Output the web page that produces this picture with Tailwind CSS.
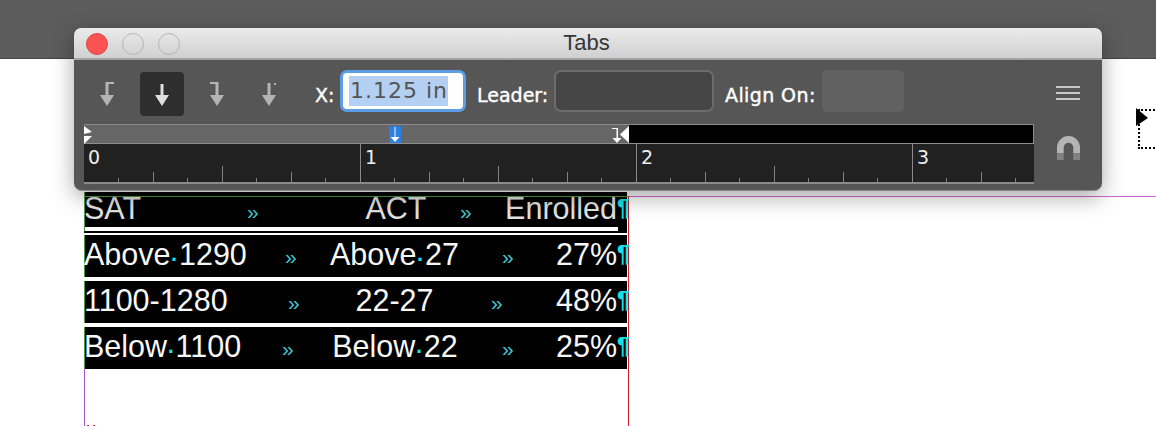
<!DOCTYPE html>
<html lang="en">

<head>
    <meta charset="UTF-8">
    <title>Tabs</title>
    <script src="https://cdn.jsdelivr.net/npm/@tailwindcss/browser@4"></script>
</head>

<body class="bg-white">
    <div class="relative w-[1156px] h-[426px] overflow-hidden bg-white font-['Liberation_Sans',sans-serif]">
        <!-- app toolbar behind the panel -->
        <div class="h-[59px] bg-[#5c5c5c] border-b border-[#444]"></div>

        <!-- table in the document -->
        <div class="relative z-10 ml-[84px] mt-[133px] w-[543px] text-[30.5px] leading-[39px] text-[#f7f7f7]">
            <div class="relative h-[39px] bg-black text-[#e2e2e2] flex border-l border-[#4f9a3c] leading-[33px]">
                <span class="w-[163px] -ml-px shrink-0">SAT</span>
                <span class="w-[10px] shrink-0 text-[21px] leading-[39px] text-[#43c9d2]">»</span>
                <span class="w-[203px] pl-[75px] shrink-0 text-center">ACT</span>
                <span class="w-[10px] shrink-0 text-[21px] leading-[39px] text-[#43c9d2]">»</span>
                <span class="w-[147px] shrink-0 text-right">Enrolled</span>
                <span class="text-[23px] font-bold text-[#18e0e6]">¶</span>
                <div class="absolute left-0 bottom-0 w-[533px] h-[4px] bg-white"></div>
            </div>
            <div class="h-[2px] bg-black"></div>
            <div class="h-[2px] bg-white"></div>
            <div class="h-[42px] bg-black flex border-l border-[#4f9a3c]">
                <span class="w-[201px] -ml-px shrink-0">Above<span class="relative top-[2px] inline-block w-[8.5px] text-center text-[22px] font-bold leading-none text-[#18e0e6]">·</span>1290</span>
                <span class="w-[10px] shrink-0 text-[21px] leading-[44px] text-[#43c9d2]">»</span>
                <span class="w-[207px] pr-[8px] shrink-0 text-center">Above<span class="relative top-[2px] inline-block w-[8.5px] text-center text-[22px] font-bold leading-none text-[#18e0e6]">·</span>27</span>
                <span class="w-[10px] shrink-0 text-[21px] leading-[44px] text-[#43c9d2]">»</span>
                <span class="w-[105px] shrink-0 text-right">27%</span>
                <span class="text-[23px] font-bold text-[#18e0e6]">¶</span>
            </div>
            <div class="h-[4px] bg-white"></div>
            <div class="h-[42px] bg-black flex border-l border-[#4f9a3c]">
                <span class="w-[204px] -ml-px shrink-0">1100-1280</span>
                <span class="w-[10px] shrink-0 text-[21px] leading-[44px] text-[#43c9d2]">»</span>
                <span class="w-[193px] shrink-0 text-center">22-27</span>
                <span class="w-[10px] shrink-0 text-[21px] leading-[44px] text-[#43c9d2]">»</span>
                <span class="w-[116px] shrink-0 text-right">48%</span>
                <span class="text-[23px] font-bold text-[#18e0e6]">¶</span>
            </div>
            <div class="h-[4px] bg-white"></div>
            <div class="h-[42px] bg-black flex border-l border-[#4f9a3c]">
                <span class="w-[198px] -ml-px shrink-0">Below<span class="relative top-[2px] inline-block w-[8.5px] text-center text-[22px] font-bold leading-none text-[#18e0e6]">·</span>1100</span>
                <span class="w-[10px] shrink-0 text-[21px] leading-[44px] text-[#43c9d2]">»</span>
                <span class="w-[210px] pr-[4px] shrink-0 text-center">Below<span class="relative top-[2px] inline-block w-[8.5px] text-center text-[22px] font-bold leading-none text-[#18e0e6]">·</span>22</span>
                <span class="w-[10px] shrink-0 text-[21px] leading-[44px] text-[#43c9d2]">»</span>
                <span class="w-[105px] shrink-0 text-right">25%</span>
                <span class="text-[23px] font-bold text-[#18e0e6]">¶</span>
            </div>
        </div>

        <!-- page guides -->
        <div class="absolute z-20 left-[84px] top-[196px] w-[543px] h-px bg-[#4f9a3c]"></div>
        <div class="absolute left-[627px] top-[196px] w-[529px] h-px bg-[#d266d2]"></div>
        <div class="absolute left-[84px] top-[196px] w-px h-[230px] bg-[#a552cc]"></div>
        <div class="absolute left-[628px] top-[196px] w-px h-[230px] bg-[#c8202c]"></div>
        <div class="absolute left-[87px] top-[425px] w-[8px] h-px flex justify-between">
            <span class="w-[2px] bg-[#c8202c]"></span>
            <span class="w-[2px] bg-[#c8202c]"></span>
        </div>

        <!-- pointer and dotted frame -->
        <div class="absolute left-[1138px] top-[109px] w-[40px] h-[40px] border-2 border-dotted border-black"></div>
        <svg class="absolute left-[1136px] top-[108px]" width="13" height="19" viewBox="0 0 13 19">
            <path d="M0 0L12 10L0 18Z" fill="#000" />
        </svg>

        <!-- Tabs panel -->
        <div class="absolute z-30 left-[74px] top-[28px] w-[1028px] h-[163px] rounded-t-[7px] rounded-b-[8px] overflow-hidden shadow-[0_6px_22px_rgba(0,0,0,0.35)] bg-[#565656] border-b border-[#8a8a8a]">
            <div class="relative h-[32px] bg-gradient-to-b from-[#ebebeb] to-[#d0d0d0] border-b-2 border-[#a4a4a4] flex items-center justify-center">
                <div class="absolute left-[12px] top-[5px] flex gap-[14px]">
                    <div class="w-[22px] h-[22px] rounded-full bg-[#fb5252] border border-[#e04646]"></div>
                    <div class="w-[22px] h-[22px] rounded-full border border-[#b6b6b6]"></div>
                    <div class="w-[22px] h-[22px] rounded-full border border-[#b6b6b6]"></div>
                </div>
                <span class="text-[22px] leading-none text-[#363636] ml-[-3px]">Tabs</span>
            </div>

            <!-- control row -->
            <div class="flex items-center h-[42px] mt-[10px] font-['DejaVu_Sans',sans-serif] text-[19px] text-white [-webkit-text-stroke:0.4px_white]">
                <div class="w-[22px] ml-[22px] mt-[6px] flex justify-center">
                    <svg width="16" height="24" viewBox="0 0 16 24" fill="#b4b4b4"><path d="M6.5 0H15V2H9.5V13H15L8 24L1 13H6.5Z" /></svg>
                </div>
                <div class="w-[44px] h-[44px] ml-[22px] mt-[6px] rounded-[4px] bg-[#2e2e2e] flex items-center justify-center">
                    <svg width="16" height="24" viewBox="0 0 16 24" fill="#dedede"><path d="M6.5 2H9.5V13H15L8 24L1 13H6.5Z" /></svg>
                </div>
                <div class="w-[22px] ml-[22px] mt-[6px] flex justify-center">
                    <svg width="16" height="24" viewBox="0 0 16 24" fill="#b4b4b4"><path d="M1 0H9.5V13H15L8 24L1 13H6.5V2H1Z" /></svg>
                </div>
                <div class="w-[22px] ml-[30px] mt-[6px] flex justify-center">
                    <svg width="16" height="24" viewBox="0 0 16 24" fill="#b4b4b4"><path d="M6.5 1H9.5V13H15L8 24L1 13H6.5ZM13 1H15V3H13Z" /></svg>
                </div>
                <span class="ml-[35px] mt-[8px] w-[18px]">X:</span>
                <div class="w-[126px] h-[42px] ml-[7px] rounded-[7px] bg-white border-[3px] border-[#5b9ee6] flex items-center pl-[6px] [-webkit-text-stroke:0]">
                    <span class="h-[30px] leading-[30px] bg-[#b3d0f2] text-[#555] text-[22px] tracking-[1px] pl-px whitespace-nowrap">1.125 in</span>
                </div>
                <span class="ml-[11px] mt-[8px] w-[71px] whitespace-nowrap">Leader:</span>
                <div class="w-[160px] h-[42px] ml-[6px] rounded-[7px] bg-[#464646] border-2 border-[#6c6c6c]"></div>
                <span class="ml-[11px] mt-[8px] w-[91px] whitespace-nowrap tracking-[0.4px]">Align On:</span>
                <div class="w-[82px] h-[42px] ml-[6px] rounded-[5px] bg-[#616161]"></div>
                <div class="w-[24px] ml-[152px] mt-[4px] flex flex-col gap-[4px]">
                    <div class="h-[2px] bg-[#c8c8c8]"></div>
                    <div class="h-[2px] bg-[#c8c8c8]"></div>
                    <div class="h-[2px] bg-[#c8c8c8]"></div>
                </div>
            </div>

            <!-- ruler -->
            <div class="relative ml-[10px] mt-[12px] w-[950px]">
                <div class="relative h-[20px] flex border-y border-[#8c8c8c]">
                    <div class="w-[545px] bg-[#666]"></div>
                    <div class="flex-1 bg-black border-r border-[#8c8c8c]"></div>
                    <svg class="absolute left-0 top-[1px]" width="9" height="18" viewBox="0 0 9 18" fill="#fff"><path d="M0 0L8 6L0 8ZM0 10H8L0 18Z" /></svg>
                    <div class="absolute left-[305px] top-[1px] w-[12px] h-[17px] bg-[#2a7fe0] flex justify-center">
                        <svg width="10" height="17" viewBox="0 0 10 17" fill="#fff"><path d="M4.5 1H5.5V11H9.5L5 16L.5 11H4.5Z" /></svg>
                    </div>
                    <svg class="absolute left-[528px] top-[1px]" width="18" height="18" viewBox="0 0 18 18" fill="#fff"><path d="M0 2H6V12H9.5L5 17L.5 12H4.5V3H0ZM17 0V17L8 8.5Z" /></svg>
                </div>
                <div class="relative h-[40px] bg-[#212121] border-b-2 border-[#8a8a8a] flex font-['DejaVu_Sans',sans-serif] text-[19px] leading-[20px] text-[#eee] overflow-hidden">
                    <div class="w-[276px] shrink-0 pl-[4px] pt-[3px]">0</div>
                    <div class="w-[276px] shrink-0 pl-[4px] pt-[3px] border-l border-[#8a8a8a]">1</div>
                    <div class="w-[276px] shrink-0 pl-[4px] pt-[3px] border-l border-[#8a8a8a]">2</div>
                    <div class="flex-1 pl-[4px] pt-[3px] border-l border-[#8a8a8a]">3</div>
                    <svg class="absolute left-0 bottom-0" width="950" height="18" viewBox="0 0 950 18" stroke="#808080" fill="none">
                        <path d="M34.5 18V14M69.5 18V8M103.5 18V14M138.5 18V2M172.5 18V14M207.5 18V8M241.5 18V14" />
                        <path d="M310.5 18V14M345.5 18V8M379.5 18V14M414.5 18V2M448.5 18V14M483.5 18V8M517.5 18V14" />
                        <path d="M586.5 18V14M621.5 18V8M655.5 18V14M690.5 18V2M724.5 18V14M759.5 18V8M793.5 18V14" />
                        <path d="M862.5 18V14M897.5 18V8M931.5 18V14" />
                    </svg>
                </div>
            </div>

            <!-- magnet -->
            <svg class="absolute left-[983px] top-[108px]" width="23" height="24" viewBox="0 0 24 25">
                <path d="M0 18V12A12 12 0 0 1 24 12V18H17V12A5 5 0 0 0 7 12V18Z" fill="#b4b4b4" />
                <path d="M0 18H7V25H0ZM17 18H24V25H17Z" fill="#828282" />
            </svg>
        </div>
    </div>
</body>

</html>
